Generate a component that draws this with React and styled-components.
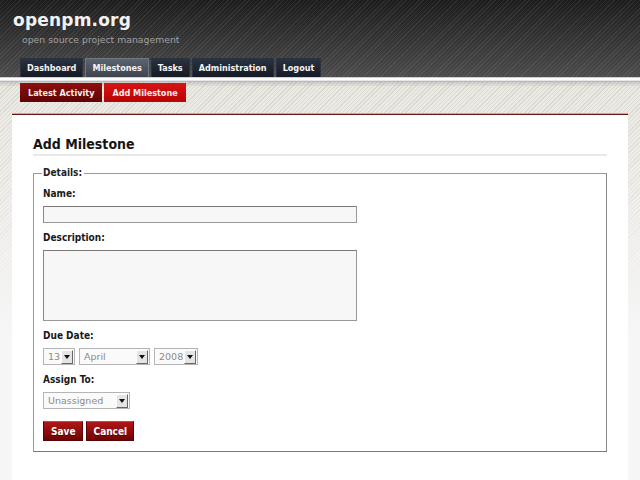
import styled, { createGlobalStyle } from "styled-components";

const GlobalStyle = createGlobalStyle`
    html, body {
        margin: 0;
        padding: 0;
    }
    body {
        font-family: "DejaVu Sans Condensed", "DejaVu Sans", sans-serif;
        background-color: #f6f6f6;
        background-image:
            linear-gradient(to bottom, rgba(246,246,246,0) 80px, #f6f6f6 330px),
            repeating-linear-gradient(-45deg, #d9d6ce 0 1px, #ebe9e3 1px 3px);
        background-repeat: no-repeat, repeat;
        min-height: 480px;
    }
`

const Header = styled.div`
    height: 77px;
    box-sizing: border-box;
    padding: 9px 0 0 20px;
    display: flex;
    flex-direction: column;
    background-color: #2e2e2e;
    background-image:
        repeating-linear-gradient(-45deg, rgba(255,255,255,0.07) 0 1px, rgba(0,0,0,0) 1px 3px),
        linear-gradient(to bottom, #1c1c1c, #4b4b4b);
`
const Logo = styled.h1`
    margin: 0 0 0 -7px;
    font-family: "DejaVu Sans", sans-serif;
    font-weight: bold;
    font-size: 17px;
    line-height: 22px;
    color: #f2f2f2;
    letter-spacing: 0.2px;
`
const Slogan = styled.div`
    margin: 3px 0 0 2px;
    font-family: "DejaVu Sans", sans-serif;
    font-size: 9.3px;
    line-height: 12px;
    color: #a0a0a0;
`
const Nav = styled.ul`
    list-style: none;
    margin: auto 0 0 0;
    padding: 0;
    display: flex;
    gap: 2px;
`
const NavTab = styled.li`
    height: 19px;
    box-sizing: border-box;
    padding: 0 6px;
    display: flex;
    align-items: center;
    font-weight: bold;
    font-size: 9px;
    color: #f4f4f4;
    border: 1px solid ${p => (p.$active ? "#6f7784" : "#2b3340")};
    border-bottom: none;
    background: ${p => (p.$active
        ? "linear-gradient(to bottom, #5b636f, #3d4450)"
        : "linear-gradient(to bottom, #2a3240, #151b25)")};
`
const Strip = styled.div`
    height: 5px;
    background: linear-gradient(to bottom, #cfcfd4 0 1px, #fdfdff 1px 3px, #e6e6e8 3px 4px, #b9b9b9 4px);
`
const SubBar = styled.div`
    height: 32px;
    box-sizing: border-box;
    padding: 1px 0 0 20px;
    background: linear-gradient(to bottom, rgba(150,150,150,0.35), rgba(150,150,150,0) 5px);
`
const SubNav = styled.ul`
    list-style: none;
    margin: 0;
    padding: 0;
    display: flex;
    gap: 2px;
`
const SubTab = styled.li`
    height: 19px;
    box-sizing: border-box;
    padding: 0 8px;
    display: flex;
    align-items: center;
    font-weight: bold;
    font-size: 9px;
    color: #fbeeee;
    background: ${p => (p.$active
        ? "linear-gradient(to bottom, #d81414, #b80404)"
        : "linear-gradient(to bottom, #8e0f0f, #5e0404)")};
`
const Content = styled.div`
    margin: 0 12px;
    background: #fff;
    border-top: 1px solid #6e1414;
    box-shadow: 0 -1px 0 #d9a0a0;
    padding: 21px 21px 30px;
    min-height: 320px;
`
const Heading = styled.h2`
    margin: 0 0 11px;
    font-size: 14px;
    line-height: 17px;
    color: #151515;
    border-bottom: 2px solid #e8e8e8;
    padding-bottom: 1px;
`
const Fieldset = styled.fieldset`
    margin: 0;
    padding: 9px 9px 10px 8px;
    border: 1px solid #9a9a9a;
    border-right-color: #888;
    border-bottom-color: #777;
`
const Legend = styled.legend`
    padding: 0 2px 0 1px;
    font-weight: bold;
    font-size: 10px;
    line-height: 12px;
    color: #222;
`
const Group = styled.div`
    margin: 0 0 9px 1px;
`
const Label = styled.label`
    display: block;
    font-weight: bold;
    font-size: 10px;
    line-height: 12px;
    color: #1a1a1a;
    margin-bottom: 6px;
`
const TextInput = styled.input`
    display: block;
    box-sizing: border-box;
    width: 314px;
    height: 17px;
    margin: 0;
    border: 1px solid #999;
    border-top-color: #777;
    border-left-color: #888;
    background: #f7f7f7;
`
const TextArea = styled.textarea`
    display: block;
    box-sizing: border-box;
    width: 314px;
    height: 71px;
    margin: 0;
    resize: none;
    border: 1px solid #999;
    border-top-color: #777;
    border-left-color: #888;
    background: #f7f7f7;
`
const Row = styled.div`
    display: flex;
    gap: 4px;
`
const Select = styled.div`
    width: ${p => p.$width}px;
    height: 17px;
    box-sizing: border-box;
    display: flex;
    align-items: center;
    justify-content: space-between;
    border: 1px solid #b5b5b5;
    background: #fafafa;
    padding: 0 1px 0 4px;
    font-family: "DejaVu Sans", sans-serif;
    font-size: 9.5px;
    color: #8a8a8a;
`
const Arrow = styled.span`
    width: 12px;
    height: 14px;
    box-sizing: border-box;
    display: flex;
    align-items: center;
    justify-content: center;
    background: #e4e4e4;
    border: 1px solid;
    border-color: #fff #666 #666 #fff;
    &::after {
        content: "";
        border-left: 3px solid transparent;
        border-right: 3px solid transparent;
        border-top: 4px solid #111;
    }
`
const Buttons = styled.div`
    display: flex;
    gap: 3px;
    margin: 12px 0 0 1px;
`
const Button = styled.button`
    height: 20px;
    box-sizing: border-box;
    padding: 0 6px 0 7px;
    font-family: "DejaVu Sans Condensed", "DejaVu Sans", sans-serif;
    font-weight: bold;
    font-size: 10px;
    color: #fff;
    text-shadow: 0 1px 0 rgba(0,0,0,0.4);
    border: 1px solid #5a0606;
    border-top-color: #c44;
    background: linear-gradient(to bottom, #b21616, #6e0303);
    cursor: pointer;
`

function DropDown({ width, value }) {
    return (
        <Select $width={width}>
            <span>{value}</span>
            <Arrow />
        </Select>
    )
}

export default function App() {
    return (
        <>
            <GlobalStyle />
            <Header>
                <Logo>openpm.org</Logo>
                <Slogan>open source project management</Slogan>
                <Nav>
                    <NavTab>Dashboard</NavTab>
                    <NavTab $active>Milestones</NavTab>
                    <NavTab>Tasks</NavTab>
                    <NavTab>Administration</NavTab>
                    <NavTab>Logout</NavTab>
                </Nav>
            </Header>
            <Strip />
            <SubBar>
                <SubNav>
                    <SubTab>Latest Activity</SubTab>
                    <SubTab $active>Add Milestone</SubTab>
                </SubNav>
            </SubBar>
            <Content>
                <Heading>Add Milestone</Heading>
                <Fieldset>
                    <Legend>Details:</Legend>
                    <Group>
                        <Label>Name:</Label>
                        <TextInput type="text" />
                    </Group>
                    <Group>
                        <Label>Description:</Label>
                        <TextArea />
                    </Group>
                    <Group>
                        <Label>Due Date:</Label>
                        <Row>
                            <DropDown width={32} value="13" />
                            <DropDown width={71} value="April" />
                            <DropDown width={44} value="2008" />
                        </Row>
                    </Group>
                    <Group>
                        <Label>Assign To:</Label>
                        <DropDown width={87} value="Unassigned" />
                    </Group>
                    <Buttons>
                        <Button>Save</Button>
                        <Button>Cancel</Button>
                    </Buttons>
                </Fieldset>
            </Content>
        </>
    )
}
